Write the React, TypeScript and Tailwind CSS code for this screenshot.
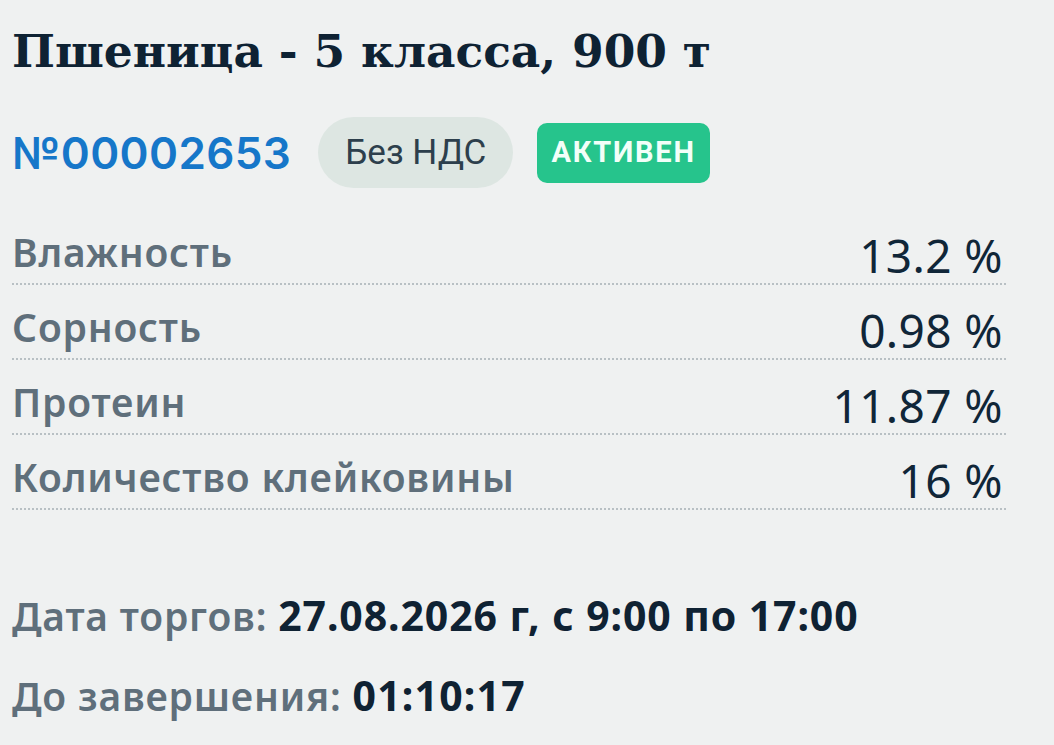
const rows = [
  { label: 'Влажность', value: '13.2 %' },
  { label: 'Сорность', value: '0.98 %' },
  { label: 'Протеин', value: '11.87 %' },
  { label: 'Количество клейковины', value: '16 %' },
];

export default function App() {
  return (
    <div className="min-h-[745px] w-full bg-[#eff1f1] px-[12px] pt-[23px] font-['Noto_Sans',sans-serif]">
      <h1 className="whitespace-nowrap font-['DejaVu_Serif',serif] text-[45.5px] font-bold leading-[56px] text-[#0e2233]">
        Пшеница - 5 класса, 900 т
      </h1>

      <div className="mt-[38px] flex h-[71px] items-center">
        <span className="font-['Inter',sans-serif] text-[44px] font-semibold leading-[48px] tracking-[0.4px] text-[#1677c9]">
          №00002653
        </span>
        <span className="ml-[27px] flex h-[71px] items-center rounded-full bg-[#dde6e2] px-[27px] font-['Roboto',sans-serif] text-[35px] leading-none text-[#2d3f4c]">
          Без НДС
        </span>
        <span className="ml-[24px] flex h-[60px] items-center rounded-[10px] bg-[#26c48c] px-[14px] font-['Roboto',sans-serif] text-[29px] font-bold leading-none tracking-[1.8px] text-[#f2fff9]">
          АКТИВЕН
        </span>
      </div>

      <div className="mt-[22px] w-[994px]">
        {rows.map((r) => (
          <div
            key={r.label}
            className="flex h-[75px] items-end justify-between border-b-2 border-dotted border-[#b8c0c4]"
          >
            <span className="text-[39px] font-semibold leading-[62px] tracking-[0.8px] text-[#5f6f7b]">
              {r.label}
            </span>
            <span className="pr-[3px] text-[46px] font-normal leading-[56px] tracking-[0.4px] text-[#102638]">
              {r.value}
            </span>
          </div>
        ))}
      </div>

      <div className="mt-[81px] whitespace-nowrap text-[39px] font-semibold leading-[48px] tracking-[0.8px] text-[#5f6f7b]">
        Дата торгов: <span className="text-[41px] font-bold tracking-[0.9px] text-[#0f2233]">27.08.2026 г, с 9:00 по 17:00</span>
      </div>
      <div className="mt-[31px] whitespace-nowrap text-[39px] font-semibold leading-[48px] tracking-[0.8px] text-[#5f6f7b]">
        До завершения: <span className="text-[41px] font-bold tracking-[1.2px] text-[#0f2233]">01:10:17</span>
      </div>
    </div>
  );
}
